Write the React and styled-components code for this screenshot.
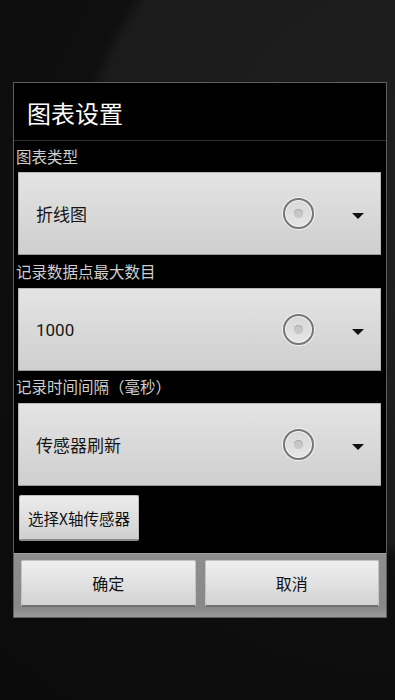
import React from "react";
import styled, { createGlobalStyle } from "styled-components";

const Global = createGlobalStyle`
  html, body {
    margin: 0;
    padding: 0;
    background: #0e0e0e;
  }
  body {
    width: 395px;
    height: 700px;
    overflow: hidden;
    font-family: "Roboto", "Noto Sans CJK SC", sans-serif;
  }
`;

const Screen = styled.div`
  width: 395px;
  height: 700px;
  box-sizing: border-box;
  padding: 82px 0 0 13px;
  background:
    radial-gradient(circle at 430px 200px, #1f1f1f 0, #1b1b1b 345px, #0f0f0f 360px, #0b0b0b 100%);
`;

const Dialog = styled.div`
  width: 374px;
  box-sizing: border-box;
  border: 1px solid #5e5e5e;
  background: #000;
  display: flex;
  flex-direction: column;
`;

const Title = styled.div`
  height: 58px;
  box-sizing: border-box;
  padding: 2px 0 0 13px;
  display: flex;
  align-items: center;
  color: #fff;
  font-size: 24px;
  border-bottom: 1px solid #2f2f2f;
  font-family: "Noto Sans CJK SC", sans-serif;
`;

const Body = styled.div`
  display: flex;
  flex-direction: column;
  padding: 0 5px 12px 2px;
`;

const Label = styled.div`
  height: ${(p) => p.$h}px;
  display: flex;
  align-items: center;
  color: #cfcfcf;
  font-size: 15.5px;
  font-family: "Noto Sans CJK SC", sans-serif;
  line-height: 1;
`;

const Spinner = styled.div`
  margin-left: 2px;
  height: 83px;
  box-sizing: border-box;
  display: flex;
  align-items: center;
  padding: 0 16px 0 17px;
  background: linear-gradient(180deg, #e4e4e4 0%, #dadada 45%, #cfcfcf 100%);
  border: 1px solid #b8b8b8;
  border-bottom-color: #9a9a9a;
  border-radius: 1px;
`;

const SpinnerText = styled.div`
  flex: 1;
  color: #151515;
  font-size: 17px;
  font-family: "Roboto", "Noto Sans CJK SC", sans-serif;
`;

const Radio = styled.div`
  width: 31px;
  height: 31px;
  box-sizing: border-box;
  border-radius: 50%;
  border: 2px solid #777;
  box-shadow: 0 0 0 1px #f4f4f4, inset 0 0 0 1px #f4f4f4;
  background: linear-gradient(180deg, #d8d8d8, #e6e6e6);
  display: flex;
  align-items: center;
  justify-content: center;
  margin-right: 38px;
`;

const Dot = styled.div`
  width: 9px;
  height: 9px;
  border-radius: 50%;
  background: #c8c8c8;
  box-shadow: inset 0 1px 1px #a8a8a8;
`;

const Arrow = styled.div`
  width: 0;
  height: 0;
  border-left: 6px solid transparent;
  border-right: 6px solid transparent;
  border-top: 6px solid #111;
  margin-top: 4px;
`;

const SmallButton = styled.div`
  margin: 9px 0 0 3px;
  width: 120px;
  height: 46px;
  box-sizing: border-box;
  display: flex;
  align-items: center;
  justify-content: center;
  color: #111;
  font-size: 15.5px;
  font-family: "Noto Sans CJK SC", sans-serif;
  background: linear-gradient(180deg, #ececec 0%, #dcdcdc 60%, #cfcfcf 100%);
  border: 1px solid #bdbdbd;
  border-bottom: 2px solid #8c8c8c;
  border-radius: 2px;
`;

const ButtonBar = styled.div`
  height: 64px;
  box-sizing: border-box;
  padding: 6px 7px 0 7px;
  display: flex;
  gap: 9px;
  background: linear-gradient(180deg, #8e8e8e 0%, #888 85%, #9a9a9a 100%);
  border-top: 1px solid #a0a0a0;
`;

const BarButton = styled.div`
  flex: 1;
  height: 47px;
  box-sizing: border-box;
  display: flex;
  align-items: center;
  justify-content: center;
  color: #111;
  font-size: 16px;
  font-family: "Noto Sans CJK SC", sans-serif;
  background: linear-gradient(180deg, #efefef 0%, #e0e0e0 55%, #d2d2d2 100%);
  border: 1px solid #c4c4c4;
  border-bottom: 2px solid #6f6f6f;
  border-radius: 2px;
`;

const Select = ({ value }) => (
  <Spinner>
    <SpinnerText>{value}</SpinnerText>
    <Radio>
      <Dot />
    </Radio>
    <Arrow />
  </Spinner>
);

export default function App() {
  return (
    <>
      <Global />
      <Screen>
        <Dialog>
          <Title>图表设置</Title>
          <Body>
            <Label $h={31}>图表类型</Label>
            <Select value="折线图" />
            <Label $h={33}>记录数据点最大数目</Label>
            <Select value="1000" />
            <Label $h={32}>记录时间间隔（毫秒）</Label>
            <Select value="传感器刷新" />
            <SmallButton>选择X轴传感器</SmallButton>
          </Body>
          <ButtonBar>
            <BarButton>确定</BarButton>
            <BarButton>取消</BarButton>
          </ButtonBar>
        </Dialog>
      </Screen>
    </>
  );
}
